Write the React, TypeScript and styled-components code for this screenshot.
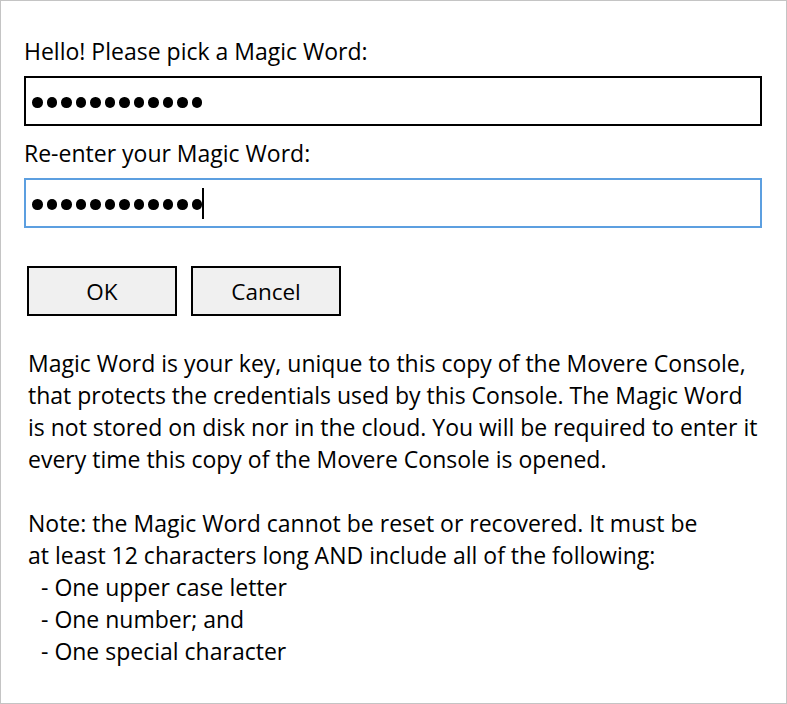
import React from "react";
import styled, { createGlobalStyle } from "styled-components";

const Global = createGlobalStyle`
  html, body { margin: 0; padding: 0; background: #ffffff; }
  body { font-family: "Open Sans", "Noto Sans", sans-serif; color: #000; }
`;

const Window = styled.div`
  width: 787px;
  height: 704px;
  box-sizing: border-box;
  border: 1px solid #c4c4c4;
  padding: 34px 24px 0 23px;
  display: flex;
  flex-direction: column;
`;

const Label = styled.label`
  display: block;
  font-size: 23px;
  line-height: 32px;
  margin: 0 0 9px 0;
`;

const Field = styled.div<{ $focused?: boolean }>`
  box-sizing: border-box;
  height: 50px;
  border: 2px solid ${(p) => (p.$focused ? "#5c9fe0" : "#000000")};
  display: flex;
  align-items: center;
  padding: 3px 0 0 6px;
  margin-bottom: ${(p) => (p.$focused ? "0" : "11px")};
`;

const Dots = styled.span`
  display: flex;
  gap: 4px;
  align-items: center;
`;

const Dot = styled.span`
  width: 10.5px;
  height: 10.5px;
  border-radius: 50%;
  background: #000;
`;

const Caret = styled.span`
  width: 2px;
  height: 31px;
  background: #000;
  margin-top: -2px;
`;

const ButtonRow = styled.div`
  display: flex;
  gap: 14px;
  margin: 38px 0 0 3px;
`;

const Button = styled.button`
  box-sizing: border-box;
  width: 150px;
  height: 50px;
  border: 2px solid #000;
  background: #f0f0f0;
  font-family: inherit;
  font-size: 22.5px;
  color: #000;
  padding: 0;
`;

const Paragraph = styled.div`
  margin: 31px 0 0 4px;
  font-size: 23px;
  line-height: 32px;
`;

const Line = styled.div<{ $indent?: boolean }>`
  white-space: pre;
  padding-left: ${(p) => (p.$indent ? "13px" : "0")};
`;

const Gap = styled.div`
  height: 31.5px;
`;

function Bullets({ n }: { n: number }) {
  return (
    <Dots>
      {Array.from({ length: n }).map((_, i) => (
        <Dot key={i} />
      ))}
    </Dots>
  );
}

export default function App() {
  return (
    <>
      <Global />
      <Window>
        <Label>Hello! Please pick a Magic Word:</Label>
        <Field>
          <Bullets n={12} />
        </Field>
        <Label>Re-enter your Magic Word:</Label>
        <Field $focused>
          <Bullets n={12} />
          <Caret />
        </Field>
        <ButtonRow>
          <Button>OK</Button>
          <Button>Cancel</Button>
        </ButtonRow>
        <Paragraph>
          <Line>Magic Word is your key, unique to this copy of the Movere Console,</Line>
          <Line>that protects the credentials used by this Console. The Magic Word</Line>
          <Line>is not stored on disk nor in the cloud. You will be required to enter it</Line>
          <Line>every time this copy of the Movere Console is opened.</Line>
          <Gap />
          <Line>Note: the Magic Word cannot be reset or recovered. It must be</Line>
          <Line>at least 12 characters long AND include all of the following:</Line>
          <Line $indent>- One upper case letter</Line>
          <Line $indent>- One number; and</Line>
          <Line $indent>- One special character</Line>
        </Paragraph>
      </Window>
    </>
  );
}
